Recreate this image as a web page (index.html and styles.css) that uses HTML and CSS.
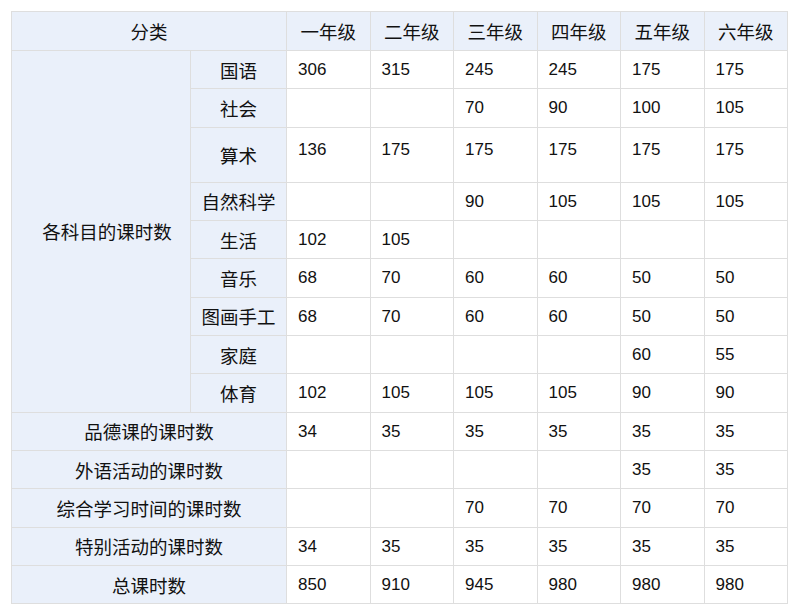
FILE: index.html
```html
<!DOCTYPE html>
<html lang="zh-CN">
<head>
<meta charset="utf-8">
<title>课时数</title>
<link rel="stylesheet" href="styles.css">
</head>
<body>
<table class="hours">
  <colgroup>
    <col class="c-group">
    <col class="c-subject">
    <col class="c-grade">
    <col class="c-grade">
    <col class="c-grade">
    <col class="c-grade">
    <col class="c-grade">
    <col class="c-grade">
  </colgroup>
  <thead>
    <tr class="head">
      <th colspan="2">分类</th>
      <th>一年级</th>
      <th>二年级</th>
      <th>三年级</th>
      <th>四年级</th>
      <th>五年级</th>
      <th>六年级</th>
    </tr>
  </thead>
  <tbody>
    <tr>
      <th rowspan="9" class="group">各科目的课时数</th>
      <th>国语</th>
      <td>306</td><td>315</td><td>245</td><td>245</td><td>175</td><td>175</td>
    </tr>
    <tr>
      <th>社会</th>
      <td></td><td></td><td>70</td><td>90</td><td>100</td><td>105</td>
    </tr>
    <tr class="tall">
      <th>算术</th>
      <td>136</td><td>175</td><td>175</td><td>175</td><td>175</td><td>175</td>
    </tr>
    <tr>
      <th>自然科学</th>
      <td></td><td></td><td>90</td><td>105</td><td>105</td><td>105</td>
    </tr>
    <tr>
      <th>生活</th>
      <td>102</td><td>105</td><td></td><td></td><td></td><td></td>
    </tr>
    <tr>
      <th>音乐</th>
      <td>68</td><td>70</td><td>60</td><td>60</td><td>50</td><td>50</td>
    </tr>
    <tr>
      <th>图画手工</th>
      <td>68</td><td>70</td><td>60</td><td>60</td><td>50</td><td>50</td>
    </tr>
    <tr>
      <th>家庭</th>
      <td></td><td></td><td></td><td></td><td>60</td><td>55</td>
    </tr>
    <tr>
      <th>体育</th>
      <td>102</td><td>105</td><td>105</td><td>105</td><td>90</td><td>90</td>
    </tr>
    <tr>
      <th colspan="2">品德课的课时数</th>
      <td>34</td><td>35</td><td>35</td><td>35</td><td>35</td><td>35</td>
    </tr>
    <tr>
      <th colspan="2">外语活动的课时数</th>
      <td></td><td></td><td></td><td></td><td>35</td><td>35</td>
    </tr>
    <tr>
      <th colspan="2">综合学习时间的课时数</th>
      <td></td><td></td><td>70</td><td>70</td><td>70</td><td>70</td>
    </tr>
    <tr>
      <th colspan="2">特别活动的课时数</th>
      <td>34</td><td>35</td><td>35</td><td>35</td><td>35</td><td>35</td>
    </tr>
    <tr>
      <th colspan="2">总课时数</th>
      <td>850</td><td>910</td><td>945</td><td>980</td><td>980</td><td>980</td>
    </tr>
  </tbody>
</table>
</body>
</html>
```
FILE: styles.css
```css
html, body {
  margin: 0;
  background: #ffffff;
}
body {
  padding: 11px;
  color: #111111;
  font-family: "Liberation Sans", "Noto Sans CJK SC", sans-serif;
}
.hours {
  border-collapse: collapse;
  table-layout: fixed;
  width: 776px;
}
.c-group { width: 179px; }
.c-subject { width: 96px; }
.c-grade { width: 83.5px; }

.hours th,
.hours td {
  border: 1px solid #dedede;
  padding: 0;
}
.hours tr {
  height: 38.33px;
}
.hours tr.head {
  height: 39px;
}
.hours tr.tall {
  height: 55px;
}
.hours th {
  background: #eaf0fa;
  color: #111111;
  font-family: "Noto Sans CJK SC", "Noto Sans CJK JP", sans-serif;
  font-size: 18.5px;
  font-weight: normal;
  text-align: center;
  vertical-align: middle;
  line-height: 1.2;
}
.hours th.group {
  padding-left: 12px;
}
.hours td {
  background: #ffffff;
  color: #111111;
  font-family: "Liberation Sans", Arial, sans-serif;
  font-size: 17px;
  text-align: left;
  vertical-align: middle;
  padding-left: 11px;
  line-height: 1.15;
}
.hours tr.tall td {
  vertical-align: top;
  padding-top: 12px;
}
```
